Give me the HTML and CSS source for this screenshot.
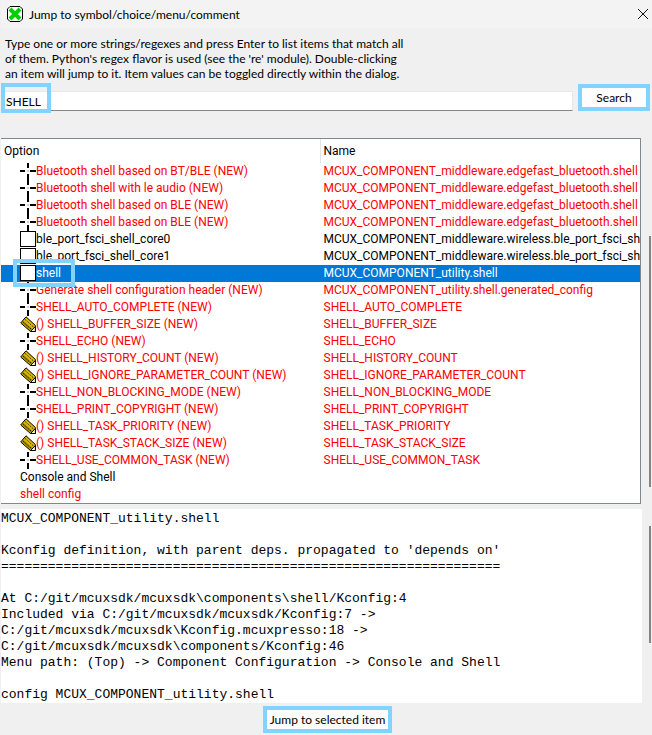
FILE: index.html
```
<!DOCTYPE html>
<html lang="en">
<head>
    <meta charset="UTF-8">
    <meta name="viewport" content="width=device-width, initial-scale=1.0">
    <title>Jump to symbol/choice/menu/comment</title>
    <link rel="stylesheet" href="styles.css">
</head>
<body>
    <!-- icons used in the tree -->
    <svg class="sprites" aria-hidden="true">
        <symbol id="cross" viewBox="0 0 16 17">
            <path d="M0 7h5v2H0zM10 7h6v2h-6zM7 0h2v5H7zM7 11h2v6H7z" fill="#000"/>
            <path d="M7 7h2v2H7z" fill="#ccc"/>
        </symbol>
        <symbol id="pencil" viewBox="0 0 16 17">
            <path d="M6 0.8L15.4 9.5V15.5H10.5L0.7 7Z" fill="#dcba00" stroke="#000"/>
            <path d="M1.5 7L3.5 5L12.5 13L11 14.8Z" fill="#a08800"/>
            <path d="M2.8 5.8L11.5 13.5M4.8 3.2L14 11.5" stroke="#000" stroke-width="0.8" stroke-dasharray="1.4 1" fill="none"/>
            <path d="M15.4 10.5V15.5H10.5Z" fill="#fff8d0" stroke="#000"/>
        </symbol>
    </svg>

    <div class="dialog">
        <header class="titlebar">
            <svg class="app-icon" viewBox="0 0 16 16" aria-hidden="true">
                <path d="M3 0.5H13L15.5 3V13L13 15.5H3L0.5 13V3Z" fill="#fff" stroke="#000"/>
                <path d="M3 3L13 13M13 3L3 13" stroke="#00d000" stroke-width="4"/>
            </svg>
            <h1>Jump to symbol/choice/menu/comment</h1>
            <button class="close" type="button" aria-label="Close">
                <svg viewBox="0 0 10 10"><path d="M0 0L10 10M10 0L0 10" stroke="#111" fill="none"/></svg>
            </button>
        </header>

        <label class="help" for="query">
            Type one or more strings/regexes and press Enter to list items that match all<br>
            of them. Python's regex flavor is used (see the 're' module). Double-clicking<br>
            an item will jump to it. Item values can be toggled directly within the dialog.
        </label>

        <form class="search">
            <div class="field">
                <input type="text" id="query" value="SHELL">
                <span class="mark mark-query"></span>
            </div>
            <button class="button marked" type="button">Search</button>
        </form>

        <div class="pane tree-pane">
            <table class="tree">
                <thead>
                    <tr><th class="col-option">Option</th><th>Name</th></tr>
                </thead>
                <tbody>
                    <tr class="new"><td><svg class="icon"><use href="#cross"/></svg>Bluetooth shell based on BT/BLE (NEW)</td><td>MCUX_COMPONENT_middleware.edgefast_bluetooth.shell</td></tr>
                    <tr class="new"><td><svg class="icon"><use href="#cross"/></svg>Bluetooth shell with le audio (NEW)</td><td>MCUX_COMPONENT_middleware.edgefast_bluetooth.shell</td></tr>
                    <tr class="new"><td><svg class="icon"><use href="#cross"/></svg>Bluetooth shell based on BLE (NEW)</td><td>MCUX_COMPONENT_middleware.edgefast_bluetooth.shell</td></tr>
                    <tr class="new"><td><svg class="icon"><use href="#cross"/></svg>Bluetooth shell based on BLE (NEW)</td><td>MCUX_COMPONENT_middleware.edgefast_bluetooth.shell</td></tr>
                    <tr><td><label><input type="checkbox">ble_port_fsci_shell_core0</label></td><td>MCUX_COMPONENT_middleware.wireless.ble_port_fsci_sh</td></tr>
                    <tr><td><label><input type="checkbox">ble_port_fsci_shell_core1</label></td><td>MCUX_COMPONENT_middleware.wireless.ble_port_fsci_sh</td></tr>
                    <tr class="selected"><td><label><input type="checkbox">shell</label><span class="mark mark-row"></span></td><td>MCUX_COMPONENT_utility.shell</td></tr>
                    <tr class="new"><td><svg class="icon"><use href="#cross"/></svg>Generate shell configuration header (NEW)</td><td>MCUX_COMPONENT_utility.shell.generated_config</td></tr>
                    <tr class="new"><td><svg class="icon"><use href="#cross"/></svg>SHELL_AUTO_COMPLETE (NEW)</td><td>SHELL_AUTO_COMPLETE</td></tr>
                    <tr class="new"><td><svg class="icon"><use href="#pencil"/></svg>() SHELL_BUFFER_SIZE (NEW)</td><td>SHELL_BUFFER_SIZE</td></tr>
                    <tr class="new"><td><svg class="icon"><use href="#cross"/></svg>SHELL_ECHO (NEW)</td><td>SHELL_ECHO</td></tr>
                    <tr class="new"><td><svg class="icon"><use href="#pencil"/></svg>() SHELL_HISTORY_COUNT (NEW)</td><td>SHELL_HISTORY_COUNT</td></tr>
                    <tr class="new"><td><svg class="icon"><use href="#pencil"/></svg>() SHELL_IGNORE_PARAMETER_COUNT (NEW)</td><td>SHELL_IGNORE_PARAMETER_COUNT</td></tr>
                    <tr class="new"><td><svg class="icon"><use href="#cross"/></svg>SHELL_NON_BLOCKING_MODE (NEW)</td><td>SHELL_NON_BLOCKING_MODE</td></tr>
                    <tr class="new"><td><svg class="icon"><use href="#cross"/></svg>SHELL_PRINT_COPYRIGHT (NEW)</td><td>SHELL_PRINT_COPYRIGHT</td></tr>
                    <tr class="new"><td><svg class="icon"><use href="#pencil"/></svg>() SHELL_TASK_PRIORITY (NEW)</td><td>SHELL_TASK_PRIORITY</td></tr>
                    <tr class="new"><td><svg class="icon"><use href="#pencil"/></svg>() SHELL_TASK_STACK_SIZE (NEW)</td><td>SHELL_TASK_STACK_SIZE</td></tr>
                    <tr class="new"><td><svg class="icon"><use href="#cross"/></svg>SHELL_USE_COMMON_TASK (NEW)</td><td>SHELL_USE_COMMON_TASK</td></tr>
                    <tr><td>Console and Shell</td><td></td></tr>
                    <tr class="new"><td>shell config</td><td></td></tr>
                </tbody>
            </table>
            <div class="scroll scroll-tree"></div>
        </div>

        <div class="pane info-pane">
<pre class="info">MCUX_COMPONENT_utility.shell

Kconfig definition, with parent deps. propagated to 'depends on'
================================================================

At C:/git/mcuxsdk/mcuxsdk\components\shell/Kconfig:4
Included via C:/git/mcuxsdk/mcuxsdk/Kconfig:7 -&gt;
C:/git/mcuxsdk/mcuxsdk\Kconfig.mcuxpresso:18 -&gt;
C:/git/mcuxsdk/mcuxsdk\components/Kconfig:46
Menu path: (Top) -&gt; Component Configuration -&gt; Console and Shell

config MCUX_COMPONENT_utility.shell</pre>
            <div class="scroll scroll-info"></div>
        </div>

        <footer class="actions">
            <button class="button marked" type="button">Jump to selected item</button>
        </footer>
    </div>
</body>
</html>
```
FILE: styles.css
```
* {
    box-sizing: border-box;
}
body {
    margin: 0;
    background: #f0f0f0;
    color: #000;
    font-family: Lato, "Open Sans", sans-serif;
    font-size: 12px;
    line-height: 15px;
}
button, input {
    font: inherit;
    color: inherit;
}
.sprites {
    position: absolute;
    width: 0;
    height: 0;
}
.dialog {
    display: flex;
    flex-direction: column;
    padding-left: 1px;
}

/* title bar */
.titlebar {
    display: flex;
    align-items: center;
    height: 28px;
    padding: 0 4px 0 6px;
    background: #f3f3f3;
}
.app-icon {
    width: 16px;
    height: 16px;
}
.titlebar h1 {
    flex: 1;
    margin: 0 0 0 6px;
    font-size: 12px;
    font-weight: normal;
}
.close {
    display: flex;
    padding: 0;
    border: 0;
    background: none;
}
.close svg {
    width: 10px;
    height: 10px;
    overflow: visible;
}

.help {
    padding: 8px 4px 2px;
    white-space: nowrap;
}

/* search row */
.search {
    display: flex;
    align-items: flex-start;
    gap: 5px;
    height: 30px;
    margin-bottom: 25px;
    padding-right: 2px;
}
.field {
    position: relative;
    flex: 1;
    padding-top: 8px;
}
.field input {
    display: block;
    width: 100%;
    height: 20px;
    padding: 0 4px;
    border: 1px solid #e8e8e8;
    border-bottom-color: #858585;
    background: #fff;
    outline: 0;
}
.mark {
    position: absolute;
    border: 4px solid #80d4ff;
    pointer-events: none;
}
.mark-query {
    top: 0;
    left: 0;
    width: 50px;
    height: 30px;
}
.button {
    height: 27px;
    padding: 0;
    border: 0;
    background: #fdfdfd;
    white-space: nowrap;
}
.marked {
    border: 4px solid #80d4ff;
}
.search .button {
    width: 72px;
    margin-top: 1px;
}

/* option tree */
.pane {
    display: flex;
}
.tree-pane {
    margin-bottom: 5px;
}
.tree {
    flex: 1;
    width: 100%;
    table-layout: fixed;
    border-collapse: separate;
    border-spacing: 0;
    border: 1px solid #828790;
    border-left: 0;
    background: #fff;
    font-family: Roboto, sans-serif;
}
.tree th {
    height: 24px;
    padding: 0 3px;
    font-weight: normal;
    text-align: left;
}
.tree .col-option {
    width: 50%;
    border-right: 1px solid #e5e5e5;
}
.tree td {
    position: relative;
    height: 17px;
    padding: 0 3px;
    line-height: 17px;
    white-space: nowrap;
}
.tree td:first-child {
    padding-left: 19px;
}
.new {
    color: #f00;
}
.selected td {
    background: #0078d7;
    color: #fff;
}
.icon {
    width: 16px;
    height: 17px;
    vertical-align: top;
}
.tree input {
    appearance: none;
    width: 16px;
    height: 16px;
    margin: 0;
    border: 1px solid #000;
    background: #fff;
    vertical-align: top;
}
.mark-row {
    z-index: 1;
    top: -6px;
    left: 12px;
    width: 62px;
    height: 28px;
}

/* scrollbar thumbs */
.scroll {
    width: 2px;
    margin-right: 1px;
    background: #858585;
}
.scroll-tree {
    margin-top: 98px;
    margin-bottom: 17px;
    margin-left: 8px;
}
.scroll-info {
    margin-top: 17px;
    margin-bottom: 60px;
    margin-left: 7px;
}

.info {
    flex: 1;
    margin: 0;
    padding: 2px 0 0;
    background: #fff;
    font-family: "Liberation Mono", monospace;
    font-size: 13px;
    line-height: 16px;
}
.actions {
    display: flex;
    justify-content: center;
    padding: 3px 0 2px 2px;
}
.actions .button {
    width: 129px;
}
```
